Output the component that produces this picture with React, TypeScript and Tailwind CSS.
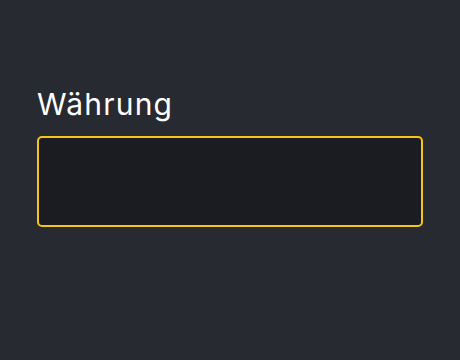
export default function App() {
  return (
    <div className="min-h-screen w-full bg-[#282a31] px-[37px] pt-[84px]" style={{ fontFamily: 'Inter, "Noto Sans", sans-serif' }}>
      <label className="block text-[30px] font-normal leading-[40px] tracking-[0.04em] text-white">Währung</label>
      <div className="mt-[12px] h-[91px] w-full rounded-[5px] border-2 border-[#f5c518] bg-[#1b1c22]" />
    </div>
  );
}
